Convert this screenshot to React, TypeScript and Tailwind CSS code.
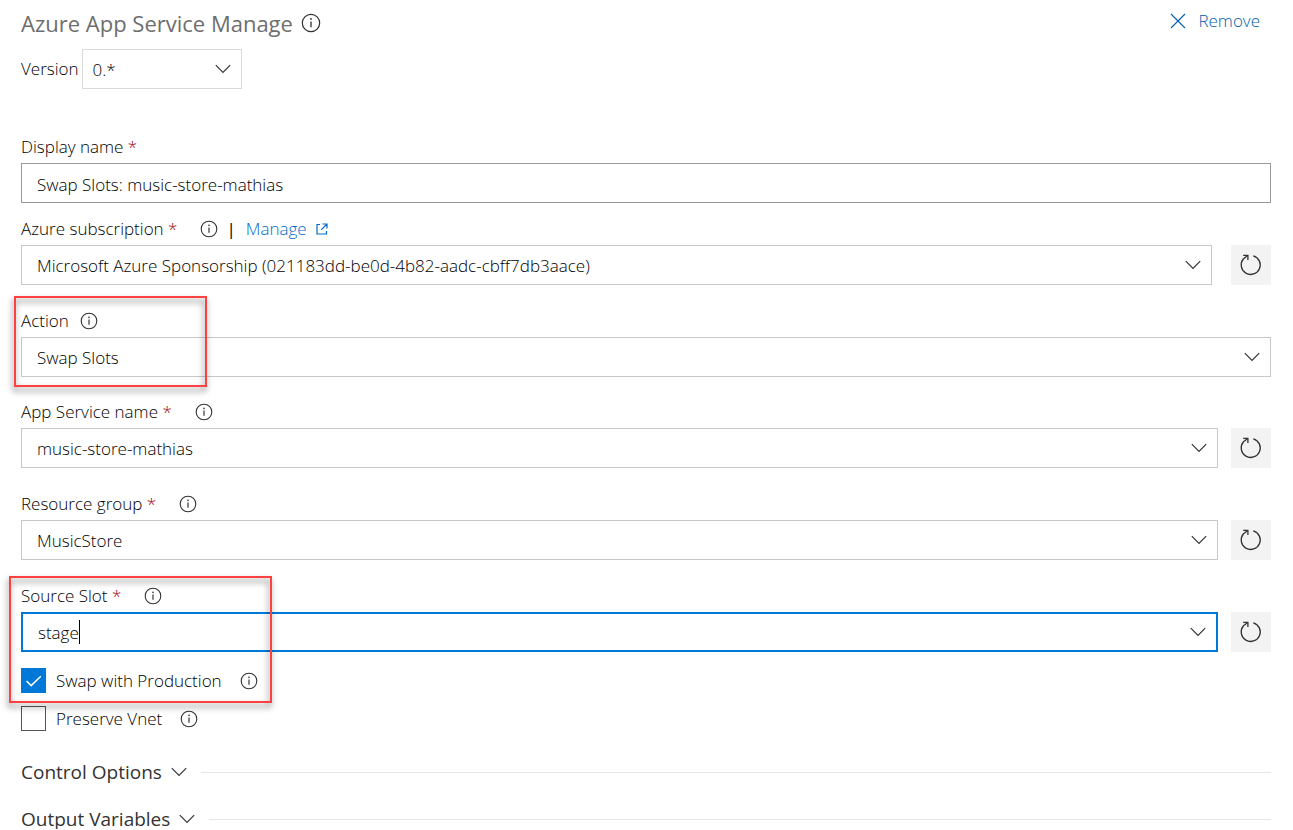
import { useState, type ReactNode } from "react";

function InfoIcon({ large = false }: { large?: boolean }) {
  return (
    <svg viewBox="0 0 18 18" className={large ? "size-5" : "size-[18px]"} fill="none" stroke="currentColor" aria-hidden="true">
      <circle cx="9" cy="9" r="7.8" strokeWidth="1.1" />
      <path d="M9 7.6v5.2" strokeWidth="1.2" />
      <circle cx="9" cy="5.4" r="0.8" fill="currentColor" stroke="none" />
    </svg>
  );
}

function InfoButton({ about, large }: { about: string; large?: boolean }) {
  return (
    <button type="button" aria-label={`More information about ${about}`} className="flex shrink-0 text-[#333333]">
      <InfoIcon large={large} />
    </button>
  );
}

function Chevron() {
  return (
    <svg viewBox="0 0 16 10" className="h-[10px] w-4 shrink-0" fill="none" stroke="#333333" strokeWidth="1.2" aria-hidden="true">
      <path d="M0.8 1.2 8 8.4 15.2 1.2" />
    </svg>
  );
}

function RefreshButton({ label }: { label: string }) {
  return (
    <button type="button" aria-label={label} className="flex size-10 shrink-0 items-center justify-center bg-[#f3f3f3] text-[#333333]">
      <svg viewBox="0 0 24 24" className="size-6" fill="none" stroke="currentColor" strokeWidth="1.3" aria-hidden="true">
        <path d="M14.3 2.8A9.5 9.5 0 1 1 4.3 6L8.6 2.6" />
        <path d="M4.2 2.4H8.9V7" />
      </svg>
    </button>
  );
}

function FieldLabel({ id, text, required, info, children }: { id: string; text: string; required?: boolean; info?: boolean; children?: ReactNode }) {
  return (
    <div className="flex h-8 items-center">
      <label htmlFor={id}>
        {text}
        {required && <span className="text-[#a4000f]"> *</span>}
      </label>
      {info && (
        <span className={required ? "ml-[23px] flex" : "ml-[11px] flex"}>
          <InfoButton about={text} />
        </span>
      )}
      {children}
    </div>
  );
}

function Dropdown({ id, value, border = "border-[#c8c8c8]", padding = "pl-[15px]" }: { id: string; value: string; border?: string; padding?: string }) {
  return (
    <div className="grid min-w-0 flex-1 items-center">
      <select id={id} defaultValue={value} className={`col-start-1 row-start-1 h-10 w-full appearance-none border bg-white pt-[2px] pr-10 outline-none ${padding} ${border}`}>
        <option>{value}</option>
      </select>
      <span className="pointer-events-none col-start-1 row-start-1 mr-[11px] justify-self-end">
        <Chevron />
      </span>
    </div>
  );
}

function Highlight({ className }: { className: string }) {
  return (
    <div
      aria-hidden="true"
      className={`pointer-events-none absolute border-2 border-[#fb4141] drop-shadow-[-1px_4px_3px_rgba(0,0,0,0.55)] ${className}`}
    />
  );
}

function Checkbox({ id, text, initial }: { id: string; text: string; initial: boolean }) {
  const [checked, setChecked] = useState(initial);
  return (
    <div className="flex h-[25px] items-center">
      <span className="grid shrink-0">
        <input
          id={id}
          type="checkbox"
          checked={checked}
          onChange={(e) => setChecked(e.target.checked)}
          className="col-start-1 row-start-1 size-[25px] appearance-none border border-[#555555] bg-white checked:border-[#0078d7] checked:bg-[#0078d7]"
        />
        {checked && (
          <svg viewBox="0 0 25 25" className="pointer-events-none col-start-1 row-start-1 size-[25px]" fill="none" stroke="white" strokeWidth="1.5" aria-hidden="true">
            <path d="M5.5 13 10.2 17.6 19.8 8.2" />
          </svg>
        )}
      </span>
      <label htmlFor={id} className="mr-[18px] ml-[10px]">{text}</label>
      <InfoButton about={text} />
    </div>
  );
}

function Section({ title }: { title: string }) {
  return (
    <button type="button" className="flex h-5 w-full items-center text-[19px] leading-5 font-normal text-[#333333]">
      <span>{title}</span>
      <span className="mr-[14px] ml-[9px]">
        <Chevron />
      </span>
      <span className="h-px flex-1 bg-[#e6e6e6]" />
    </button>
  );
}

export default function App() {
  const [slot, setSlot] = useState("stage");
  return (
    <main className="bg-white pr-[22px] pl-[21px] font-['Open_Sans','Noto_Sans',sans-serif] text-[17px] leading-6 font-light text-black">
      <header className="flex items-start justify-between pt-[9px]">
        <h1 className="flex h-7 items-center gap-2 text-[22px] leading-7 font-normal text-[#6e6e6e]">
          Azure App Service Manage
          <InfoButton about="Azure App Service Manage" large />
        </h1>
        <button type="button" className="mr-[11px] flex items-center gap-3 text-[#0060b0]">
          <svg viewBox="0 0 16 16" className="size-4" fill="none" stroke="currentColor" strokeWidth="1.1" aria-hidden="true">
            <path d="M1 1 15 15M15 1 1 15" />
          </svg>
          Remove
        </button>
      </header>

      <div className="mt-3 flex items-center gap-[3px]">
        <label htmlFor="version">Version</label>
        <div className="flex w-40">
          <Dropdown id="version" value="0.*" border="border-[#dadada]" padding="pl-[10px]" />
        </div>
      </div>

      <div className="mt-[42px]">
        <FieldLabel id="display-name" text="Display name" required />
        <input id="display-name" defaultValue="Swap Slots: music-store-mathias" className="block h-10 w-full border border-[#999999] px-[15px] pt-[2px] outline-none" />
      </div>

      <div className="mt-[10px]">
        <FieldLabel id="subscription" text="Azure subscription" required info>
          <span className="mr-[10px] ml-2 font-normal">|</span>
          <a href="#manage" className="flex items-center gap-[9px] text-[#006bc7]">
            Manage
            <svg viewBox="0 0 12 12" className="size-3" fill="none" stroke="currentColor" strokeWidth="1.2" aria-hidden="true">
              <path d="M4 1.5H1V11H10.5V8M6.5 1H11V5.5M11 1 5.2 6.8" />
            </svg>
          </a>
        </FieldLabel>
        <div className="flex gap-[19px]">
          <Dropdown id="subscription" value="Microsoft Azure Sponsorship (021183dd-be0d-4b82-aadc-cbff7db3aace)" />
          <RefreshButton label="Refresh Azure subscription" />
        </div>
      </div>

      <div className="relative mt-5">
        <FieldLabel id="action" text="Action" info />
        <div className="flex">
          <Dropdown id="action" value="Swap Slots" />
        </div>
        <Highlight className="-top-[9px] -left-[7px] h-[91px] w-[193px]" />
      </div>

      <div className="mt-[19px]">
        <FieldLabel id="app-service" text="App Service name" required info />
        <div className="flex gap-[13px]">
          <Dropdown id="app-service" value="music-store-mathias" />
          <RefreshButton label="Refresh App Service name" />
        </div>
      </div>

      <div className="mt-5">
        <FieldLabel id="resource-group" text="Resource group" required info />
        <div className="flex gap-[13px]">
          <Dropdown id="resource-group" value="MusicStore" />
          <RefreshButton label="Refresh Resource group" />
        </div>
      </div>

      <div className="relative mt-5">
        <FieldLabel id="source-slot" text="Source Slot" required info />
        <div className="flex gap-[13px]">
          <div className="relative grid min-w-0 flex-1 items-center">
            <input
              id="source-slot"
              role="combobox"
              aria-expanded="false"
              value={slot}
              onChange={(e) => setSlot(e.target.value)}
              className="col-start-1 row-start-1 h-10 w-full border-2 border-[#0078d7] pr-10 pl-[15px] outline-none"
            />
            <span className="pointer-events-none col-start-1 row-start-1 mr-3 justify-self-end">
              <Chevron />
            </span>
            <span aria-hidden="true" className="pointer-events-none absolute top-2 left-[58px] h-6 w-px bg-black" />
          </div>
          <RefreshButton label="Refresh Source Slot" />
        </div>
        <div className="mt-4">
          <Checkbox id="swap-production" text="Swap with Production" initial />
        </div>
        <Highlight className="-top-1 -left-3 h-[127px] w-[263px]" />
      </div>

      <div className="mt-[13px]">
        <Checkbox id="preserve-vnet" text="Preserve Vnet" initial={false} />
      </div>

      <div className="mt-[31px] flex flex-col gap-[27px]">
        <Section title="Control Options" />
        <Section title="Output Variables" />
      </div>
    </main>
  );
}
